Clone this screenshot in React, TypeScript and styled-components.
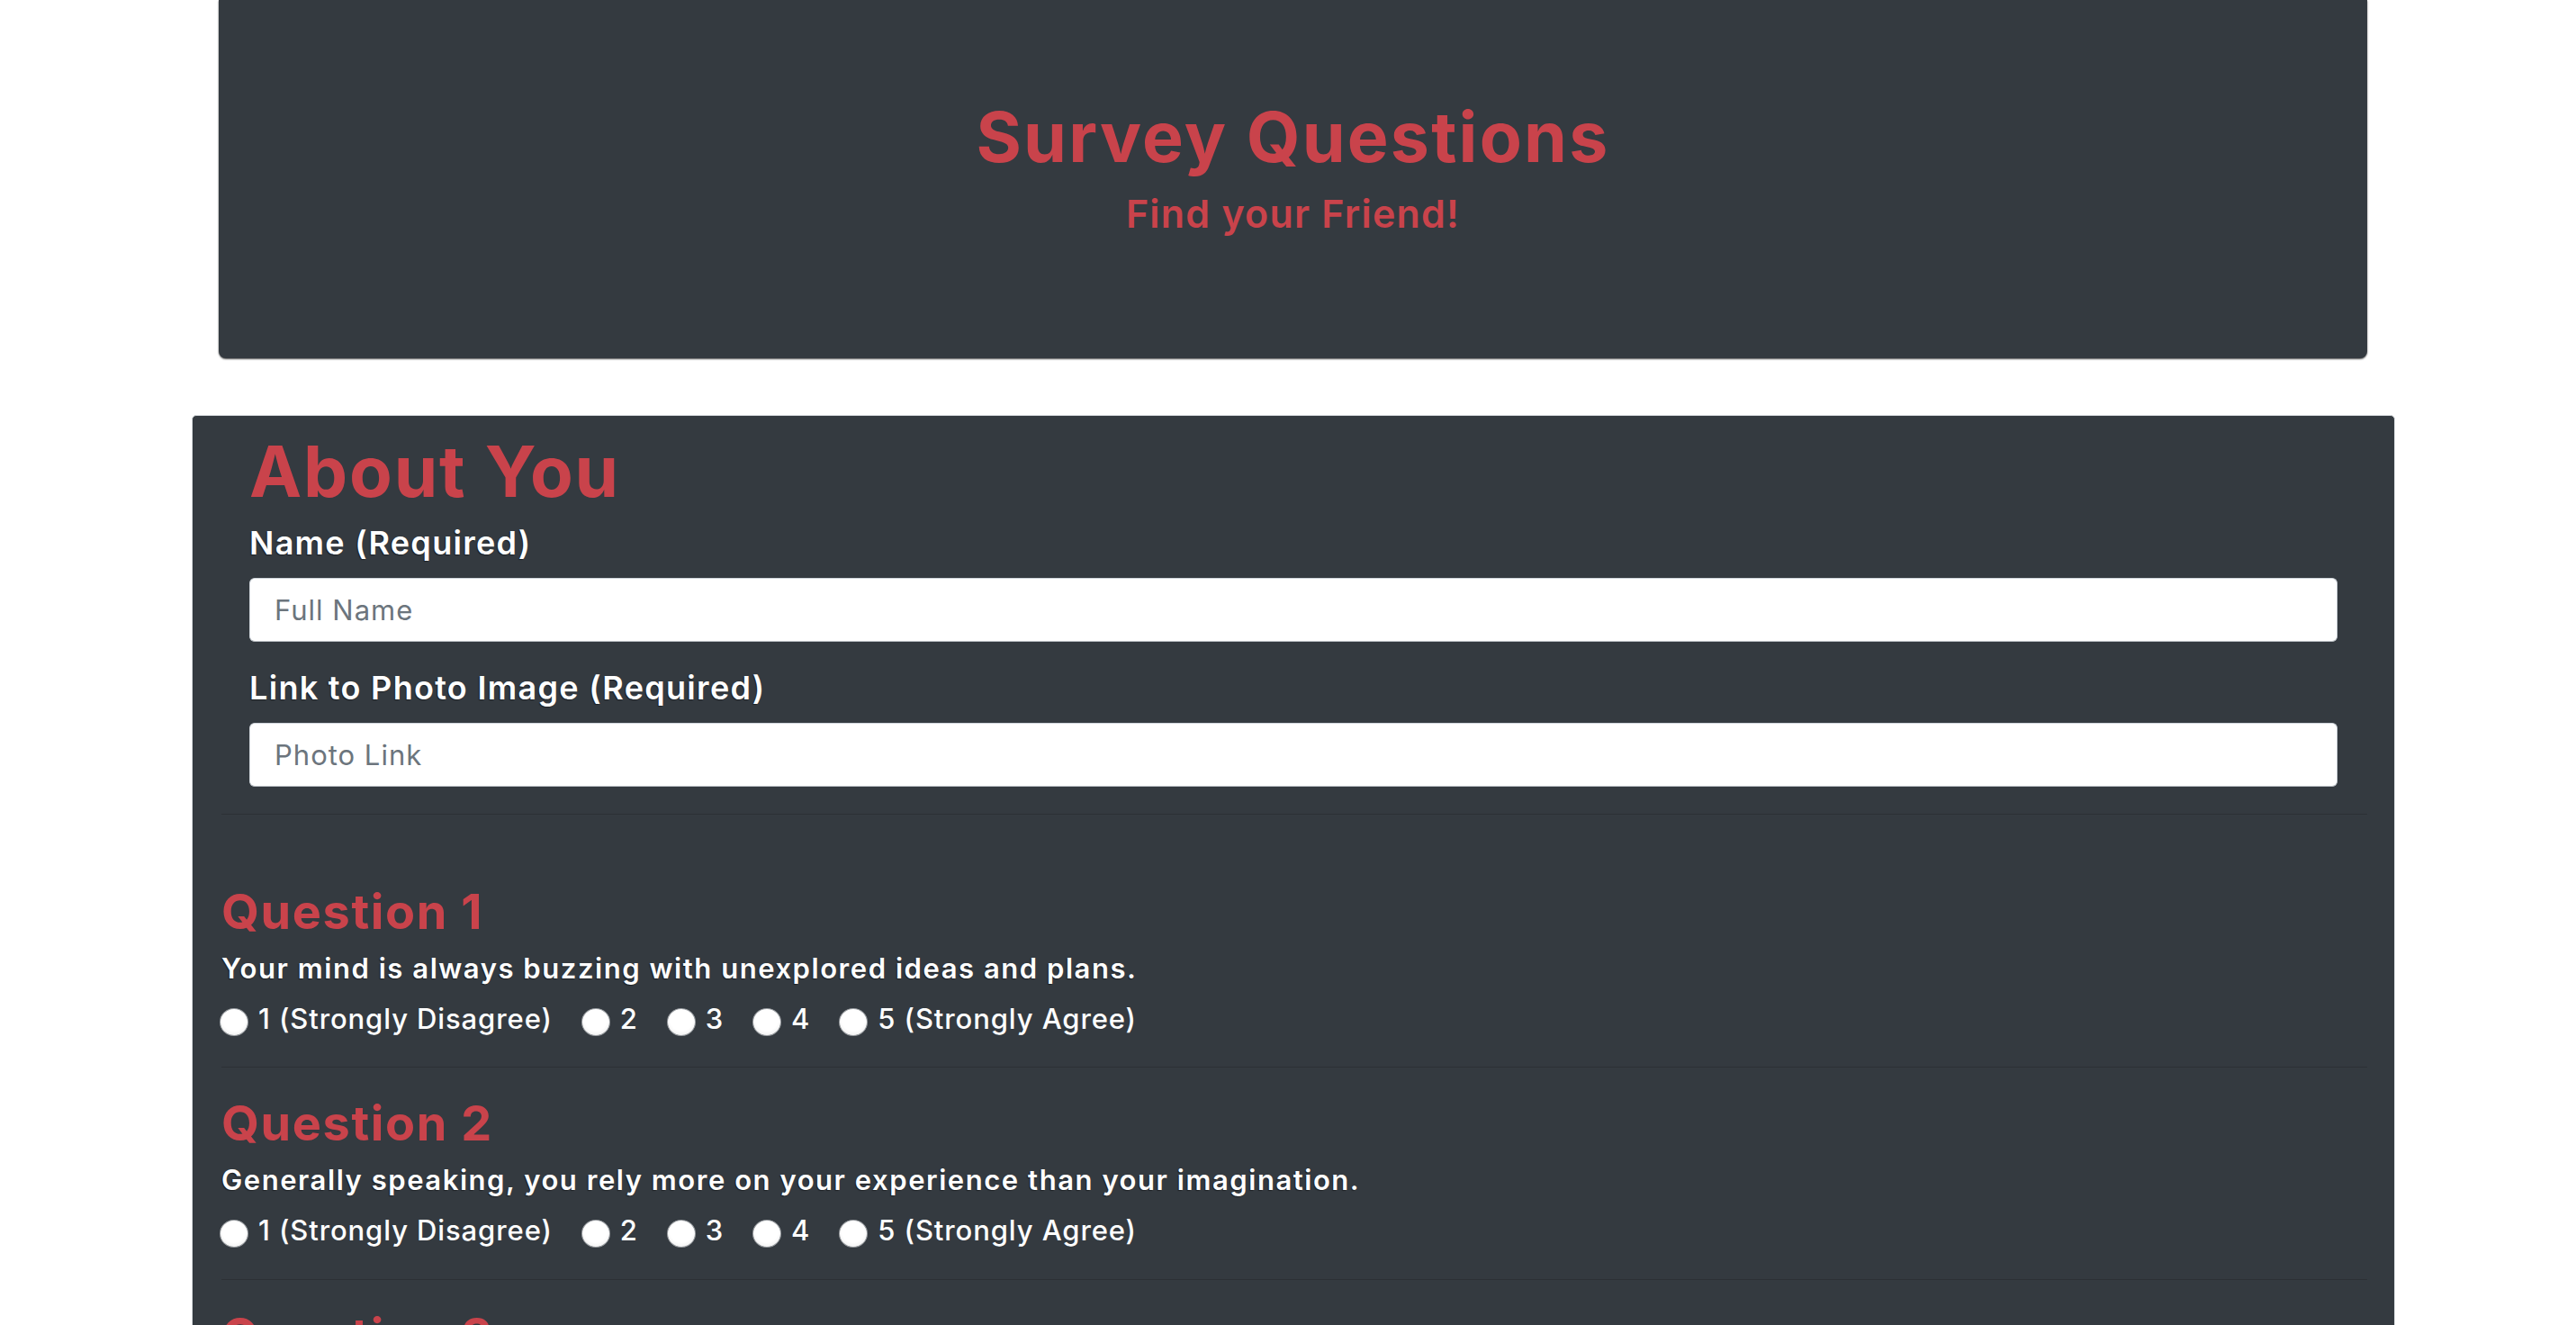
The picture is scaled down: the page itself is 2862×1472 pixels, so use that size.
import React from 'react';
import styled, {createGlobalStyle} from 'styled-components';

const GlobalStyle = createGlobalStyle`
  html, body {
    margin: 0;
    padding: 0;
    background: #ffffff;
  }
  body {
    font-family: Inter, "Liberation Sans", Arial, sans-serif;
    color: #ffffff;
  }
  * {
    box-sizing: border-box;
  }
`;

const RED = '#c9434b';
const DARK = '#343a40';

const Page = styled.div`
  width: 2448px;
  margin-left: 213px;
  padding-bottom: 60px;
`;

const Jumbotron = styled.header`
  height: 398px;
  margin: 0 31px 0 30px;
  padding-top: 106px;
  background: ${DARK};
  border-radius: 0 0 8px 8px;
  box-shadow: 0 1px 2px rgba(0, 0, 0, 0.7);
  display: flex;
  flex-direction: column;
  align-items: center;
`;

const Title = styled.h1`
  margin: 0;
  font-size: 77px;
  line-height: 1.2;
  font-weight: 700;
  letter-spacing: 2.2px;
  color: ${RED};
`;

const Subtitle = styled.h4`
  margin: 14px 0 0;
  font-size: 43px;
  line-height: 1.2;
  font-weight: 600;
  letter-spacing: 1.2px;
  color: ${RED};
`;

const Card = styled.form`
  margin-top: 63px;
  padding: 15px 30px 0 32px;
  background: ${DARK};
  border: 1px solid #d5d9dc;
  border-radius: 5px;
`;

const AboutSection = styled.section`
  padding: 0 33px 0 31px;
`;

const SectionTitle = styled.h1`
  margin: 0;
  font-size: 78px;
  line-height: 1.2;
  font-weight: 700;
  letter-spacing: 1.8px;
  color: ${RED};
`;

const FormGroup = styled.div<{$first?: boolean}>`
  display: flex;
  flex-direction: column;
  margin-top: ${p => (p.$first ? '11px' : '30px')};
`;

const Label = styled.label`
  font-size: 36px;
  line-height: 1.2;
  font-weight: 600;
  letter-spacing: 1.3px;
  color: #ffffff;
  text-shadow: -1px 1px 1px rgba(0, 0, 0, 0.45);
`;

const TextInput = styled.input`
  margin-top: 17px;
  height: 71px;
  width: 100%;
  padding: 0 27px;
  font-family: inherit;
  font-size: 31px;
  letter-spacing: 1px;
  color: #495057;
  background: #ffffff;
  border: 1px solid #ced4da;
  border-bottom-color: #b9bec3;
  border-radius: 6px;
  outline: none;

  &::placeholder {
    color: #6c757d;
  }
`;

const Divider = styled.hr`
  margin: 30px 0 0;
  height: 1px;
  border: 0;
  background: #2c3035;
`;

const Question = styled.section<{$first?: boolean}>`
  margin-top: ${p => (p.$first ? '76px' : '30px')};
`;

const QuestionTitle = styled.h3`
  margin: 0;
  font-size: 54px;
  line-height: 1.2;
  font-weight: 700;
  letter-spacing: 1.6px;
  color: ${RED};
`;

const QuestionText = styled.p`
  margin: 7px 0 0;
  font-size: 31px;
  line-height: 1.5;
  font-weight: 600;
  letter-spacing: 1.55px;
  color: #ffffff;
  text-shadow: -1px 1px 1px rgba(0, 0, 0, 0.45);
`;

const Options = styled.div`
  display: flex;
  align-items: center;
  margin-top: 10px;
  height: 46px;
`;

const Option = styled.label`
  display: flex;
  align-items: center;
  margin-right: 34px;
  font-size: 31px;
  line-height: 1.5;
  font-weight: 500;
  letter-spacing: 0.9px;
  color: #ffffff;
`;

const Radio = styled.input`
  appearance: none;
  flex: none;
  width: 32px;
  height: 31px;
  margin: 6px 11px 0 -2px;
  border-radius: 50%;
  background: radial-gradient(circle at 50% 40%, #ffffff 55%, #e6e6e6 100%);
  border: 1px solid #9a9ea2;
`;

const questions = [
  'Your mind is always buzzing with unexplored ideas and plans.',
  'Generally speaking, you rely more on your experience than your imagination.',
  'You find it easy to stay relaxed and focused even when there is some pressure.',
  'You rarely do something just out of sheer curiosity.',
  'People can rarely upset you.',
  'It is often difficult for you to relate to other people’s feelings.',
  'In a discussion, truth should be more important than people’s sensitivities.',
  'You rarely get carried away by fantasies and ideas.',
  'You think that everyone’s views should be respected regardless of whether they are supported by facts or not.',
  'You feel more energetic after spending time with a group of people.',
];

const choices = ['1 (Strongly Disagree)', '2', '3', '4', '5 (Strongly Agree)'];

export default function App() {
  return (
    <>
      <GlobalStyle />
      <Page>
        <Jumbotron>
          <Title>Survey Questions</Title>
          <Subtitle>Find your Friend!</Subtitle>
        </Jumbotron>
        <Card onSubmit={e => e.preventDefault()}>
          <AboutSection>
            <SectionTitle>About You</SectionTitle>
            <FormGroup $first>
              <Label htmlFor="name">Name (Required)</Label>
              <TextInput id="name" type="text" placeholder="Full Name" />
            </FormGroup>
            <FormGroup>
              <Label htmlFor="photo">Link to Photo Image (Required)</Label>
              <TextInput id="photo" type="text" placeholder="Photo Link" />
            </FormGroup>
          </AboutSection>
          {questions.map((text, i) => (
            <React.Fragment key={i}>
              <Divider />
              <Question $first={i === 0}>
                <QuestionTitle>Question {i + 1}</QuestionTitle>
                <QuestionText>{text}</QuestionText>
                <Options>
                  {choices.map((choice, j) => (
                    <Option key={j}>
                      <Radio type="radio" name={`q${i + 1}`} value={j + 1} />
                      {choice}
                    </Option>
                  ))}
                </Options>
              </Question>
            </React.Fragment>
          ))}
          <Divider />
        </Card>
      </Page>
    </>
  );
}
